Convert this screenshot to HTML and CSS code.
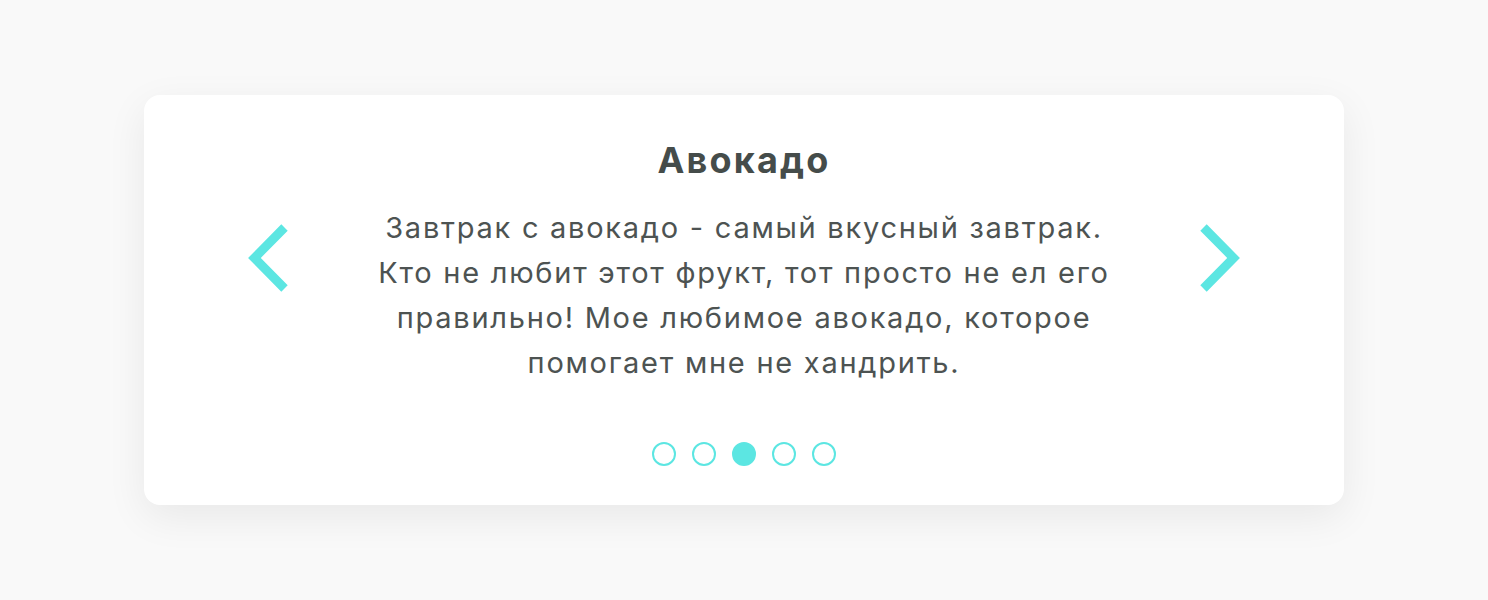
FILE: index.html
```html
<!DOCTYPE html>
<html lang="ru">
<head>
<meta charset="utf-8">
<link rel="stylesheet" href="styles.css">
</head>
<body>
<div class="card">
  <div class="row">
    <button class="arrow" aria-label="Назад">
      <svg width="40" height="70" viewBox="0 0 40 70"><polyline points="36.5,4.5 6.4,35 36.5,65.5" fill="none" stroke="#5ce6e2" stroke-width="9"/></svg>
    </button>
    <div class="content">
      <h2 class="title">Авокадо</h2>
      <p class="text">Завтрак с авокадо - самый вкусный завтрак. Кто не любит этот фрукт, тот просто не ел его правильно! Мое любимое авокадо, которое помогает мне не хандрить.</p>
    </div>
    <button class="arrow" aria-label="Вперёд">
      <svg width="40" height="70" viewBox="0 0 40 70"><polyline points="3.5,4.5 33.6,35 3.5,65.5" fill="none" stroke="#5ce6e2" stroke-width="9"/></svg>
    </button>
  </div>
  <div class="dots">
    <span class="dot"></span>
    <span class="dot"></span>
    <span class="dot active"></span>
    <span class="dot"></span>
    <span class="dot"></span>
  </div>
</div>
</body>
</html>
```
FILE: styles.css
```css
* { box-sizing: border-box; }
html, body { margin: 0; padding: 0; }
body {
  background: #f9f9f9;
  min-height: 100vh;
  display: flex;
  align-items: center;
  justify-content: center;
  font-family: Inter, "Noto Sans", sans-serif;
}
.card {
  width: 1200px;
  height: 410px;
  background: #fff;
  border-radius: 16px;
  box-shadow: 0 12px 40px rgba(0, 0, 0, 0.07);
  padding: 40px 104px 0;
  display: flex;
  flex-direction: column;
}
.row {
  display: flex;
  align-items: center;
  justify-content: space-between;
}
.arrow {
  background: none;
  border: 0;
  padding: 0;
  width: 40px;
  height: 70px;
  margin-bottom: 5px;
  display: flex;
}
.content {
  width: 740px;
  text-align: center;
}
.title {
  margin: 0;
  font-size: 36px;
  font-weight: 700;
  letter-spacing: 0.06em;
  line-height: 50px;
  color: #454c4a;
}
.text {
  margin: 20px 0 0;
  font-size: 29px;
  letter-spacing: 0.06em;
  line-height: 45px;
  color: #4d5352;
}
.dots {
  margin-top: 57px;
  display: flex;
  justify-content: center;
  gap: 16px;
}
.dot {
  width: 24px;
  height: 24px;
  border-radius: 50%;
  border: 2px solid #5ce6e2;
}
.dot.active { background: #5ce6e2; }
```
